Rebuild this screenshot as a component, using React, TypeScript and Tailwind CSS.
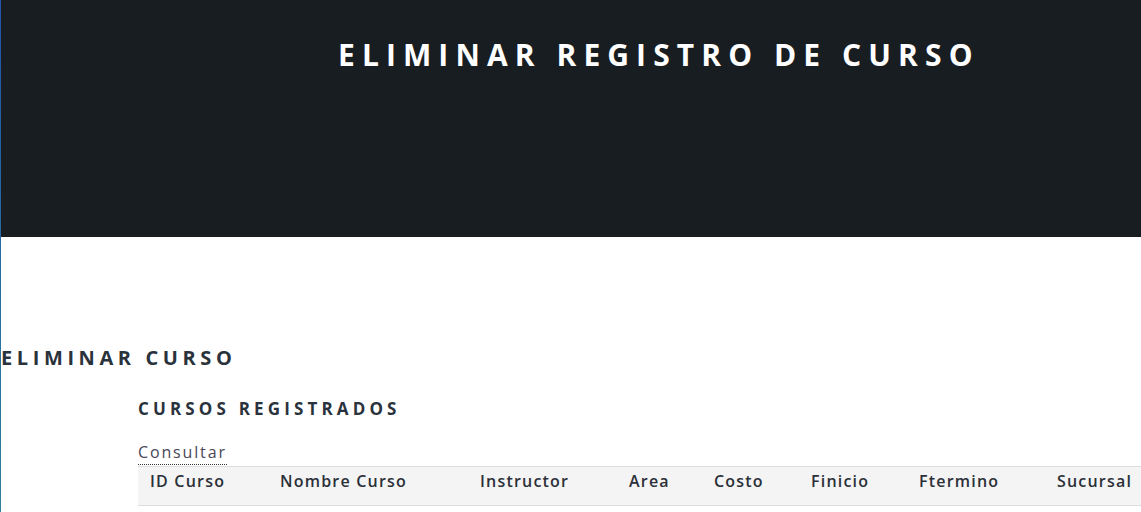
const columns: { label: string; width: string }[] = [
  { label: "ID Curso", width: "w-[130px]" },
  { label: "Nombre Curso", width: "w-[200px]" },
  { label: "Instructor", width: "w-[149px]" },
  { label: "Area", width: "w-[85px]" },
  { label: "Costo", width: "w-[97px]" },
  { label: "Finicio", width: "w-[108px]" },
  { label: "Ftermino", width: "w-[138px]" },
  { label: "Sucursal", width: "w-[160px]" },
];

export default function App() {
  return (
    <div className="flex min-h-[512px] w-full overflow-hidden bg-white font-['Open_Sans',sans-serif]">
      <div className="w-px shrink-0 bg-gradient-to-b from-[#2453a8] to-[#2f8199]" />
      <div className="min-w-0 flex-1">
        <header className="h-[237px] bg-[#181d21] pl-[337px] pt-[40px]">
          <h1 className="m-0 whitespace-nowrap text-[30px] font-bold uppercase leading-none tracking-[7.1px] text-white">
            Eliminar registro de curso
          </h1>
        </header>

        <main className="pt-[111px]">
          <h2 className="m-0 text-[20px] font-bold uppercase leading-none tracking-[4.6px] text-[#2a323c]">
            Eliminar curso
          </h2>

          <section className="pl-[137px] pt-[32px]">
            <h3 className="m-0 text-[17px] font-bold uppercase leading-none tracking-[4.15px] text-[#2a323c]">
              Cursos registrados
            </h3>

            <a
              href="#"
              className="mt-[27px] inline-block border-b border-dotted border-[#333] pb-[4px] text-[16px] leading-none tracking-[1.85px] text-[#4a4658] no-underline"
            >
              Consultar
            </a>

            <table className="mt-px w-[1067px] table-fixed border-collapse">
              <thead>
                <tr className="border-y border-[#dddddd] bg-[#f4f4f4]">
                  {columns.map((col) => (
                    <th
                      key={col.label}
                      className={`${col.width} whitespace-nowrap pb-[16px] pl-3 pt-[6px] text-left text-[16px] font-semibold leading-none tracking-[1.2px] text-[#2b3038]`}
                    >
                      {col.label}
                    </th>
                  ))}
                </tr>
              </thead>
            </table>
          </section>
        </main>
      </div>
    </div>
  );
}
